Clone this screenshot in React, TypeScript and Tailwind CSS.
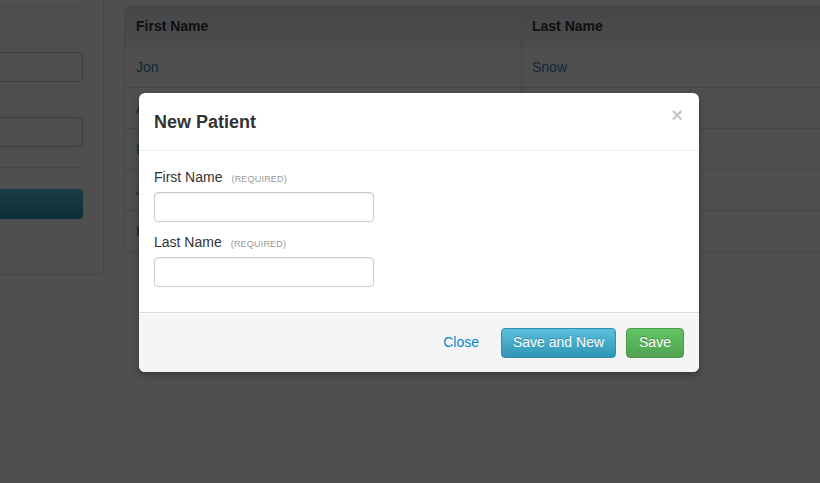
import React from 'react';

const rows = [
  { first: 'Jon', last: 'Snow' },
  { first: 'Arya', last: 'Stark' },
  { first: 'Robb', last: 'Stark' },
  { first: 'Jaime', last: 'Lannister' },
  { first: 'Khal', last: 'Drogo' },
];

function Field({ label }: { label: string }) {
  return (
    <div className="flex flex-col">
      <label className="flex h-[20px] items-baseline text-[14px] leading-[18px] text-[#333]">
        <span>{label}</span>
        <span className="ml-[9px] text-[9px] leading-none uppercase tracking-[0.2px] text-[#999]">(Required)</span>
      </label>
      <input
        type="text"
        className="mt-[4px] h-[30px] w-[220px] rounded-[4px] border border-[#ccc] bg-white px-2 shadow-[inset_0_1px_1px_rgba(0,0,0,0.075)] outline-none"
      />
    </div>
  );
}

export default function App() {
  return (
    <div className="relative h-[483px] w-[820px] overflow-hidden bg-white font-['Liberation_Sans',Arial,sans-serif]">
      {/* page under the modal */}
      <div className="flex gap-[20px]">
        <div className="-mt-[20px] ml-[-40px] flex h-[295px] w-[144px] shrink-0 flex-col rounded-b-[6px] border border-[#ddd] bg-white pr-[20px]">
          <div className="mt-[25px] border-b border-[#ddd]" />
          <div className="ml-[20px] mt-[45px] h-[30px] rounded-[4px] border border-[#ccc]" />
          <div className="ml-[20px] mt-[35px] h-[30px] rounded-[4px] border border-[#ccc]" />
          <div className="ml-[20px] mt-[20px] border-b border-[#e5e5e5]" />
          <div className="ml-[20px] mt-[21px] h-[30px] rounded-[4px] bg-gradient-to-b from-[#5bc0de] to-[#2f96b4]" />
        </div>
        <div className="mt-[6px] shrink-0">
          <table className="w-[720px] border-separate border-spacing-0 overflow-hidden rounded-l-[6px] border border-[#ddd] text-[14px]">
            <thead>
              <tr className="bg-gradient-to-b from-[#e0e6ec] to-[#f0f2f4]">
                <th className="h-[40px] w-[396px] border-b border-[#ddd] px-[11px] text-left font-bold text-[#333]">First Name</th>
                <th className="h-[40px] border-b border-l border-[#ddd] px-[10px] text-left font-bold text-[#333]">Last Name</th>
              </tr>
            </thead>
            <tbody>
              {rows.map((r, i) => (
                <tr key={r.first}>
                  <td className={`h-[41px] px-[11px] text-[#3a7fb8] ${i < rows.length - 1 ? 'border-b border-[#ddd]' : ''}`}>{r.first}</td>
                  <td className={`h-[41px] border-l border-[#ddd] px-[10px] text-[#3a7fb8] ${i < rows.length - 1 ? 'border-b border-[#ddd]' : ''}`}>{r.last}</td>
                </tr>
              ))}
            </tbody>
          </table>
        </div>
      </div>

      {/* backdrop */}
      <div className="absolute inset-0 bg-black/[0.69]" />

      {/* modal */}
      <div className="absolute left-[139px] top-[93px] flex w-[560px] flex-col rounded-[6px] bg-white shadow-[0_3px_7px_rgba(0,0,0,0.3)]">
        <div className="flex h-[58px] items-center justify-between border-b border-[#eee] px-[15px] pt-[2px]">
          <h3 className="text-[18px] font-bold text-[#333]">New Patient</h3>
          <span className="mb-[15px] mr-[1px] text-[20px] font-bold leading-none text-[#c8c8c8]">×</span>
        </div>
        <div className="flex h-[161px] flex-col gap-[11px] px-[15px] pt-[17px]">
          <Field label="First Name" />
          <Field label="Last Name" />
        </div>
        <div className="flex h-[60px] items-center justify-end gap-[10px] rounded-b-[6px] border-t border-[#ddd] bg-[#f5f5f5] px-[15px] shadow-[inset_0_1px_0_#fff]">
          <a className="mr-[12px] text-[14px] text-[#0088cc]">Close</a>
          <button className="h-[30px] w-[115px] rounded-[4px] border border-[#2f8fac] bg-gradient-to-b from-[#5bc0de] to-[#2f96b4] text-[14px] text-white [text-shadow:0_-1px_0_rgba(0,0,0,0.25)]">
            Save and New
          </button>
          <button className="h-[30px] w-[58px] rounded-[4px] border border-[#4b9a4b] bg-gradient-to-b from-[#62c462] to-[#51a351] text-[14px] text-white [text-shadow:0_-1px_0_rgba(0,0,0,0.25)]">
            Save
          </button>
        </div>
      </div>
    </div>
  );
}
